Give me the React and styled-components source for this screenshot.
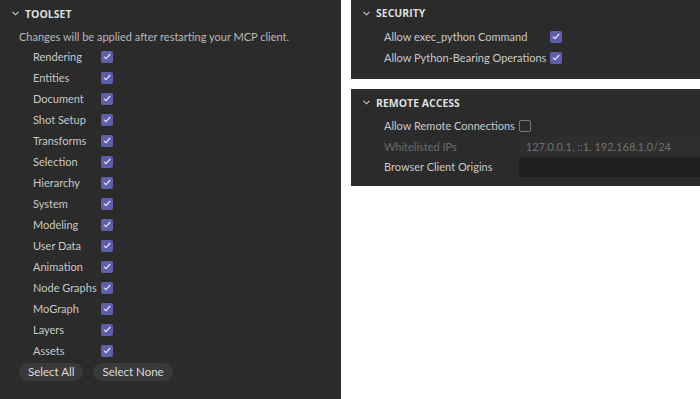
import React from "react";
import styled, { createGlobalStyle } from "styled-components";

const Global = createGlobalStyle`
  html, body { margin: 0; padding: 0; background: #ffffff; }
  body { font-family: Lato, "Noto Sans", sans-serif; font-size: 11px; }
`;

const Page = styled.div`
  display: flex;
  gap: 10px;
  width: 700px;
  height: 399px;
  overflow: hidden;
  background: #ffffff;
`;

const Column = styled.div`
  display: flex;
  flex-direction: column;
  gap: 10px;
  flex: 1;
  min-width: 0;
`;

const Panel = styled.section`
  background: #2b2b2b;
  color: #c4c4c4;
  box-sizing: border-box;
  width: ${(p) => p.$width || "auto"};
  height: ${(p) => p.$height || "auto"};
  flex-shrink: 0;
  overflow: hidden;
`;

const Header = styled.div`
  display: flex;
  align-items: center;
  padding-left: ${(p) => p.$indent}px;
  gap: 6px;
  font-family: "Open Sans", sans-serif;
  font-weight: 700;
  font-size: 10.5px;
  color: #dedede;
  height: ${(p) => p.$h}px;
`;

const Chevron = () => (
  <svg width="7" height="5" viewBox="0 0 7 5">
    <path d="M0.5 0.8 L3.5 3.8 L6.5 0.8" fill="none" stroke="#cfcfcf" strokeWidth="1.1" />
  </svg>
);

const Note = styled.div`
  height: 19px;
  line-height: 19px;
  padding-left: 19px;
  color: #b8b8b8;
`;

const Grid = styled.div`
  display: grid;
  grid-template-columns: max-content ${(p) => p.$rest || "max-content"};
  column-gap: 4px;
  padding-left: ${(p) => p.$indent}px;
  grid-auto-rows: ${(p) => p.$row}px;
  align-items: center;
`;

const Label = styled.div`
  color: ${(p) => (p.$disabled ? "#6c6c6c" : "#c8c8c8")};
  white-space: nowrap;
  line-height: 16px;
`;

const Box = styled.span`
  display: inline-flex;
  align-items: center;
  justify-content: center;
  width: 12px;
  height: 12px;
  box-sizing: border-box;
  border-radius: 2px;
  background: ${(p) => (p.$checked ? "#5d5fa9" : "transparent")};
  border: ${(p) => (p.$checked ? "none" : "1px solid #7a7a7a")};
`;

const Check = ({ checked }) => (
  <Box $checked={checked}>
    {checked && (
      <svg width="8" height="7" viewBox="0 0 8 7">
        <path d="M0.8 3.6 L3 5.6 L7.2 1" fill="none" stroke="#e4e4f4" strokeWidth="1.2" />
      </svg>
    )}
  </Box>
);

const Field = styled.div`
  height: 19px;
  line-height: 19px;
  border-radius: 3px;
  padding-left: 7px;
  margin-right: -20px;
  background: ${(p) => (p.$disabled ? "#2e2e2e" : "#1f1f1f")};
  color: ${(p) => (p.$disabled ? "#707070" : "#c8c8c8")};
  white-space: nowrap;
`;

const Buttons = styled.div`
  display: flex;
  gap: 10px;
  padding-left: 19px;
  margin-top: 2px;
`;

const Pill = styled.button`
  font-family: inherit;
  font-size: 11.5px;
  height: 18px;
  padding: 0 9px;
  border: none;
  border-radius: 9px;
  background: #3a3a3a;
  color: #dcdcdc;
  line-height: 18px;
`;

const tools = [
  "Rendering", "Entities", "Document", "Shot Setup", "Transforms", "Selection",
  "Hierarchy", "System", "Modeling", "User Data", "Animation", "Node Graphs",
  "MoGraph", "Layers", "Assets",
];

export default function App() {
  return (
    <>
      <Global />
      <Page>
        <Panel $width="341px" $height="399px">
          <Header $indent={12} $h={27}>
            <Chevron />
            TOOLSET
          </Header>
          <Note>Changes will be applied after restarting your MCP client.</Note>
          <Grid $indent={33} $row={21}>
            {tools.map((t) => (
              <React.Fragment key={t}>
                <Label>{t}</Label>
                <Check checked />
              </React.Fragment>
            ))}
          </Grid>
          <Buttons>
            <Pill>Select All</Pill>
            <Pill>Select None</Pill>
          </Buttons>
        </Panel>
        <Column>
          <Panel $height="79px">
            <Header $indent={12} $h={26}>
              <Chevron />
              SECURITY
            </Header>
            <Grid $indent={33} $row={21}>
              <Label>Allow exec_python Command</Label>
              <Check checked />
              <Label>Allow Python-Bearing Operations</Label>
              <Check checked />
            </Grid>
          </Panel>
          <Panel $height="97px">
            <Header $indent={12} $h={27}>
              <Chevron />
              REMOTE ACCESS
            </Header>
            <Grid $indent={33} $row={20.5} $rest="1fr">
              <Label>Allow Remote Connections</Label>
              <Check checked={false} />
              <Label $disabled>Whitelisted IPs</Label>
              <Field $disabled>127.0.0.1, ::1, 192.168.1.0/24</Field>
              <Label>Browser Client Origins</Label>
              <Field />
            </Grid>
          </Panel>
        </Column>
      </Page>
    </>
  );
}
